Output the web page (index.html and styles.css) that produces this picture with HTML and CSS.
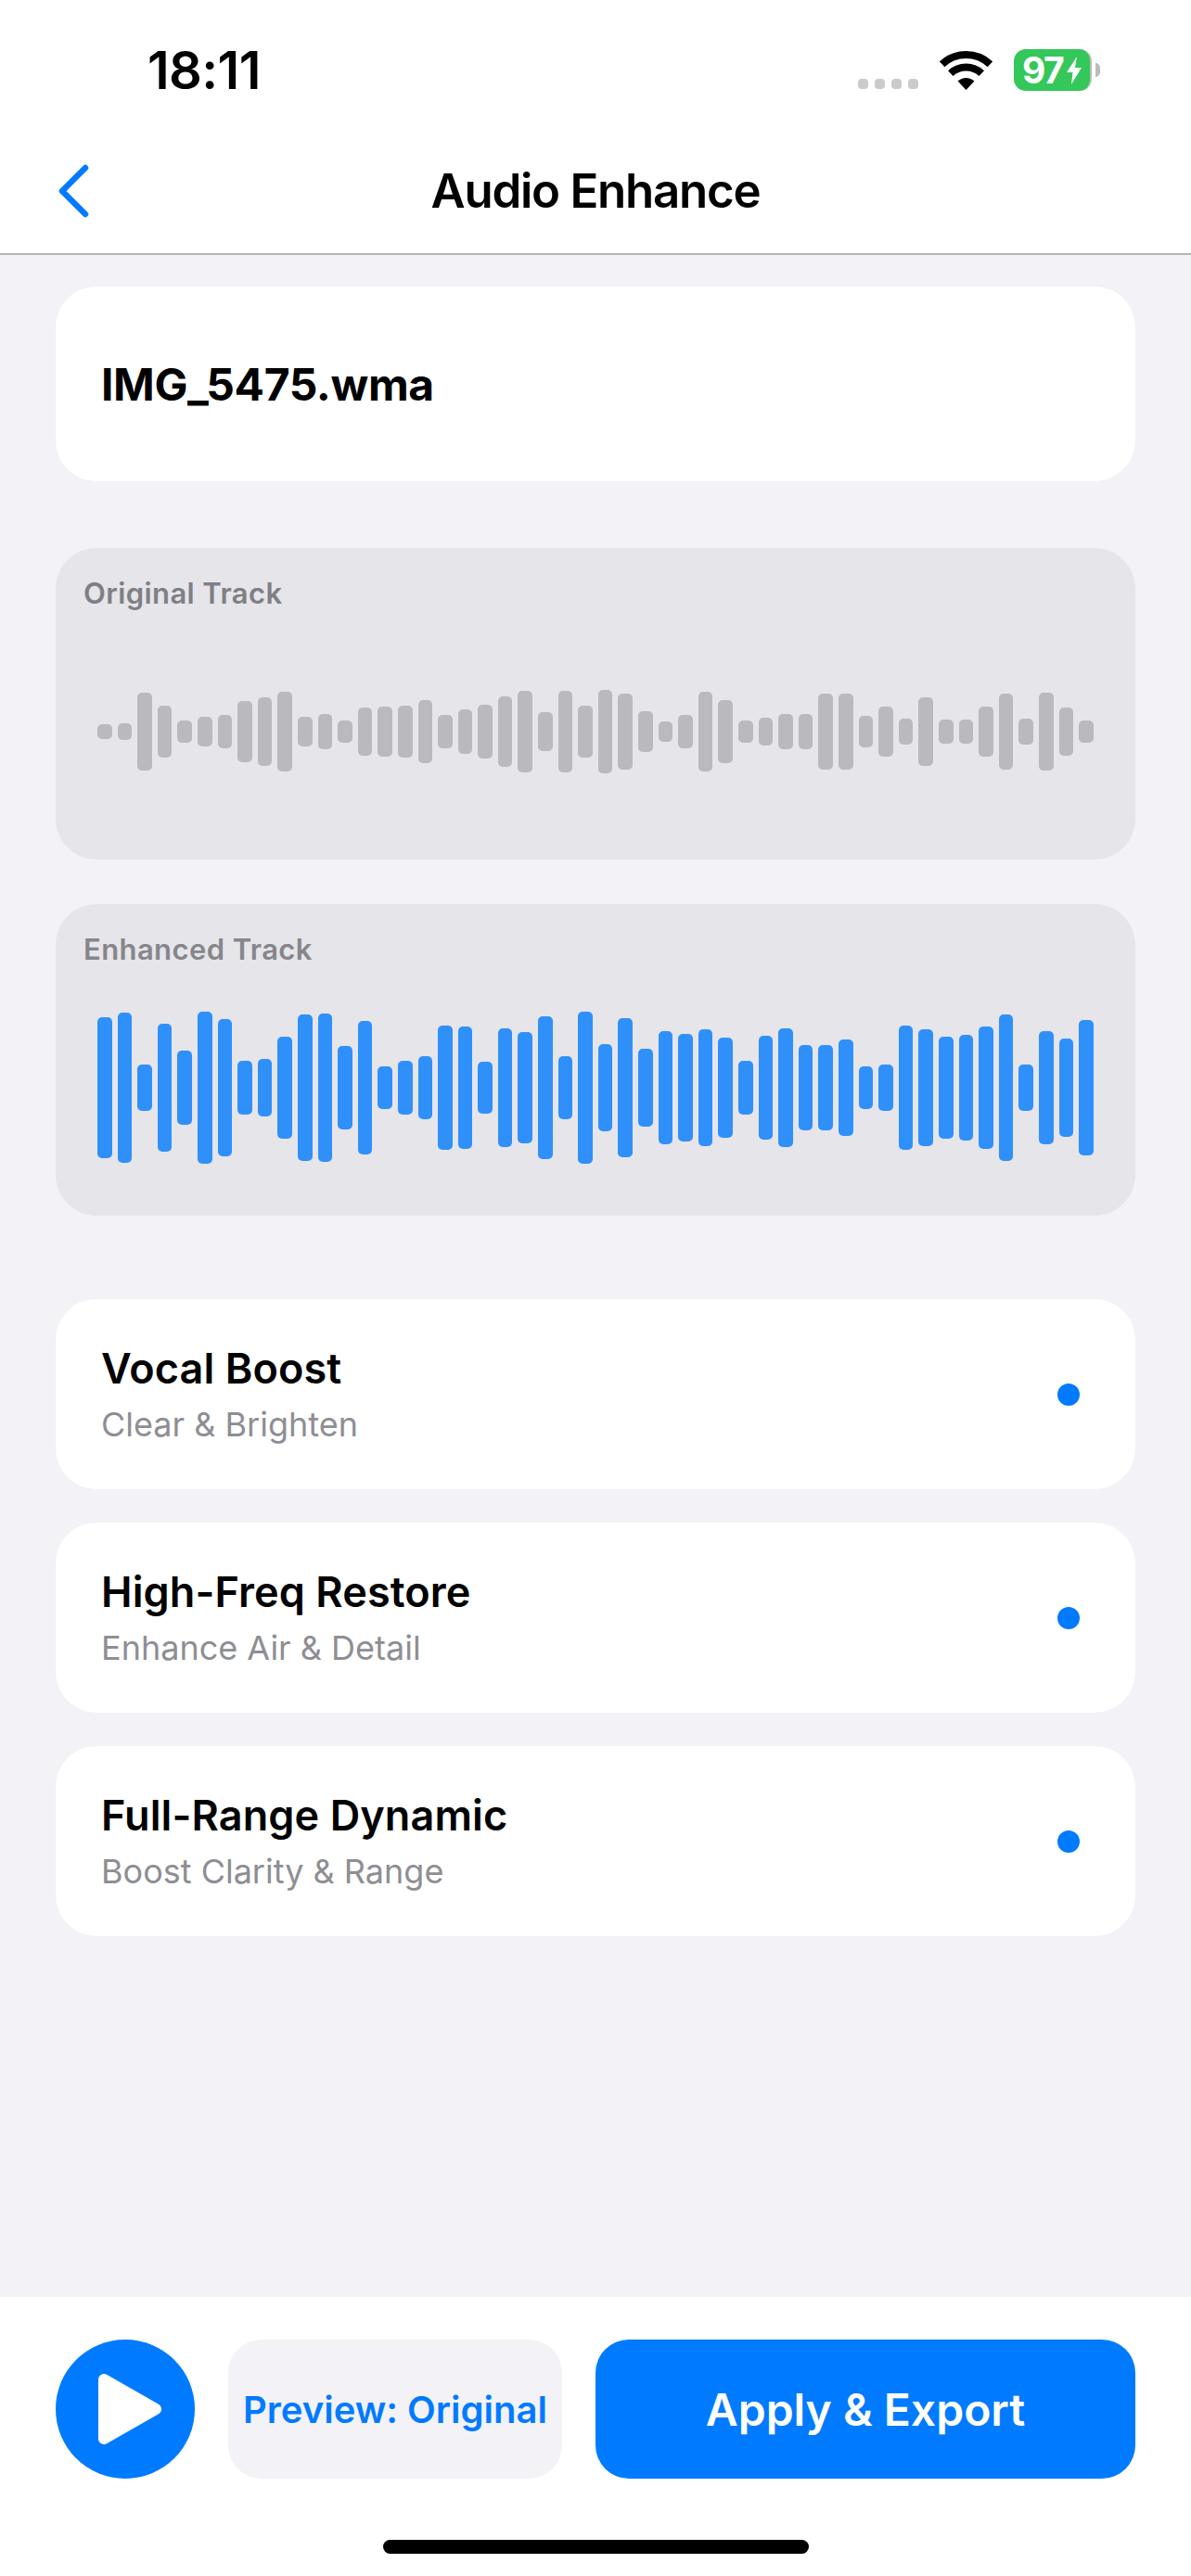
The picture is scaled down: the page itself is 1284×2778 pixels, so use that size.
FILE: index.html
```html
<!DOCTYPE html>
<html lang="en">
<head>
<meta charset="utf-8">
<title>Audio Enhance</title>
<link rel="stylesheet" href="styles.css">
</head>
<body>
<div class="screen">
  <header class="header">
    <div class="status">
      <span class="time">18:11</span>
      <div class="status-icons">
        <div class="signal"><i></i><i></i><i></i><i></i></div>
        <svg class="wifi" viewBox="0 0 57 42" width="57" height="42"><path d="M2.6 14.2A38 38 0 0 1 54.4 14.2" fill="none" stroke="#000" stroke-width="8"/><path d="M11.8 24.1A24.5 24.5 0 0 1 45.2 24.1" fill="none" stroke="#000" stroke-width="8"/><path d="M28.5 42L19.6 32.5A13 13 0 0 1 37.4 32.5Z" fill="#000"/></svg>
        <div class="battery"><span class="battery-level">97</span><svg class="bolt" viewBox="0 0 16 30" width="16" height="30"><path d="M11 0L0 17H6.5L5 30L16 12H9Z" fill="#fff"/></svg></div>
        <span class="battery-nub"></span>
      </div>
    </div>
    <nav class="nav">
      <svg class="back" viewBox="0 0 34 58" width="34" height="58"><path d="M30 4L5 29L30 54" fill="none" stroke="#007aff" stroke-width="6.5" stroke-linecap="round" stroke-linejoin="round"/></svg>
      <h1 class="nav-title">Audio Enhance</h1>
    </nav>
  </header>

  <main class="content">
    <section class="file-card">IMG_5475.wma</section>

    <section class="track track-first">
      <div class="track-label label-original">Original Track</div>
      <div class="wave wave-gray">
        <span style="height:16px"></span><span style="height:18px"></span><span style="height:84px"></span><span style="height:56px"></span><span style="height:24px"></span><span style="height:32px"></span><span style="height:36px"></span><span style="height:66px"></span><span style="height:74px"></span><span style="height:86px"></span>
        <span style="height:32px"></span><span style="height:38px"></span><span style="height:24px"></span><span style="height:52px"></span><span style="height:54px"></span><span style="height:56px"></span><span style="height:68px"></span><span style="height:36px"></span><span style="height:48px"></span><span style="height:58px"></span>
        <span style="height:76px"></span><span style="height:88px"></span><span style="height:42px"></span><span style="height:88px"></span><span style="height:56px"></span><span style="height:90px"></span><span style="height:82px"></span><span style="height:44px"></span><span style="height:22px"></span><span style="height:36px"></span>
        <span style="height:86px"></span><span style="height:68px"></span><span style="height:24px"></span><span style="height:30px"></span><span style="height:38px"></span><span style="height:38px"></span><span style="height:82px"></span><span style="height:82px"></span><span style="height:34px"></span><span style="height:54px"></span>
        <span style="height:28px"></span><span style="height:74px"></span><span style="height:26px"></span><span style="height:26px"></span><span style="height:54px"></span><span style="height:82px"></span><span style="height:28px"></span><span style="height:84px"></span><span style="height:52px"></span><span style="height:24px"></span>
      </div>
    </section>

    <section class="track track-second">
      <div class="track-label label-enhanced">Enhanced Track</div>
      <div class="wave wave-blue">
        <span style="height:152px"></span><span style="height:162px"></span><span style="height:50px"></span><span style="height:138px"></span><span style="height:80px"></span><span style="height:164px"></span><span style="height:148px"></span><span style="height:58px"></span><span style="height:62px"></span><span style="height:110px"></span>
        <span style="height:158px"></span><span style="height:160px"></span><span style="height:90px"></span><span style="height:144px"></span><span style="height:46px"></span><span style="height:58px"></span><span style="height:68px"></span><span style="height:134px"></span><span style="height:132px"></span><span style="height:56px"></span>
        <span style="height:128px"></span><span style="height:120px"></span><span style="height:154px"></span><span style="height:68px"></span><span style="height:164px"></span><span style="height:94px"></span><span style="height:150px"></span><span style="height:84px"></span><span style="height:122px"></span><span style="height:116px"></span>
        <span style="height:126px"></span><span style="height:108px"></span><span style="height:58px"></span><span style="height:112px"></span><span style="height:128px"></span><span style="height:92px"></span><span style="height:92px"></span><span style="height:104px"></span><span style="height:46px"></span><span style="height:50px"></span>
        <span style="height:134px"></span><span style="height:126px"></span><span style="height:110px"></span><span style="height:114px"></span><span style="height:132px"></span><span style="height:158px"></span><span style="height:50px"></span><span style="height:122px"></span><span style="height:106px"></span><span style="height:146px"></span>
      </div>
    </section>

    <section class="options">
      <div class="option">
        <div class="option-text"><div class="option-title">Vocal Boost</div><div class="option-sub">Clear &amp; Brighten</div></div>
        <span class="dot"></span>
      </div>
      <div class="option">
        <div class="option-text"><div class="option-title">High-Freq Restore</div><div class="option-sub">Enhance Air &amp; Detail</div></div>
        <span class="dot"></span>
      </div>
      <div class="option">
        <div class="option-text"><div class="option-title">Full-Range Dynamic</div><div class="option-sub">Boost Clarity &amp; Range</div></div>
        <span class="dot"></span>
      </div>
    </section>
  </main>

  <footer class="footer">
    <div class="actions">
      <button class="play" type="button"><svg viewBox="0 0 68 76" width="68" height="76"><path d="M6 6L62 38L6 70Z" fill="#fff" stroke="#fff" stroke-width="12" stroke-linejoin="round"/></svg></button>
      <button class="preview" type="button">Preview: Original</button>
      <button class="apply" type="button">Apply &amp; Export</button>
    </div>
    <div class="home-indicator"></div>
  </footer>
</div>
</body>
</html>
```
FILE: styles.css
```css
* { box-sizing: border-box; }
html, body { margin: 0; padding: 0; }
body { font-family: Inter, "Liberation Sans", sans-serif; background: #f2f2f7; color: #000; }

.screen { width: 1284px; height: 2778px; display: flex; flex-direction: column; overflow: hidden; }

.header { height: 275px; flex: none; background: #fff; border-bottom: 2px solid #b4b4b8; }
.status { height: 132px; padding: 53px 98px 0 159px; display: flex; justify-content: space-between; align-items: flex-start; }
.time { font-size: 56px; font-weight: 600; line-height: 47px; letter-spacing: -0.6px; }
.status-icons { height: 45px; display: flex; align-items: center; }
.signal { align-self: flex-end; margin: 0 23px 2px 0; display: flex; gap: 7px; }
.signal i { width: 11px; height: 11px; border-radius: 4px; background: #cbcbcb; }
.wifi { margin-right: 23px; }
.battery { width: 84px; height: 45px; background: #34c759; border-radius: 13px; border-right: 2px solid #b9bdba; padding-left: 9px; display: flex; align-items: center; }
.battery-level { color: #fff; font-size: 39px; font-weight: 700; line-height: 1; letter-spacing: -1.5px; }
.bolt { margin-left: 4px; }
.battery-nub { width: 5px; height: 15px; margin-left: 4px; background: #bcbcbc; border-radius: 0 8px 8px 0; }

.nav { height: 141px; position: relative; display: flex; align-items: center; justify-content: center; padding-top: 6px; }
.back { position: absolute; left: 62px; top: 45px; }
.nav-title { margin: 0; font-size: 51px; font-weight: 600; line-height: 60px; letter-spacing: -1.25px; }

.content { flex: 1; padding: 34px 60px 0; display: flex; flex-direction: column; }
.file-card { height: 210px; background: #fff; border-radius: 44px; padding: 0 49px; display: flex; align-items: center; font-size: 48px; font-weight: 700; letter-spacing: -0.4px; }

.track { height: 336px; background: #e5e5ea; border-radius: 44px; padding: 31px 30px 0; }
.track-first { margin-top: 72px; }
.track-second { margin-top: 48px; }
.track-label { height: 36px; line-height: 36px; font-size: 31px; font-weight: 600; letter-spacing: 0.4px; }
.label-original { color: #7f7f85; }
.label-enhanced { color: #86868b; }

.wave { height: 168px; margin: 47px 15px 0; display: flex; align-items: center; gap: 6px; }
.wave span { flex: 1; border-radius: 5px; }
.wave-gray span { background: #b9b9be; }
.wave-blue span { background: #2f90fa; }

.options { margin-top: 90px; display: flex; flex-direction: column; gap: 36px; }
.option { height: 205px; background: #fff; border-radius: 44px; padding: 0 60px 0 49px; display: flex; align-items: center; justify-content: space-between; }
.option-text { display: flex; flex-direction: column; }
.option-title { font-size: 45px; font-weight: 600; line-height: 54px; letter-spacing: 0.1px; }
.option-sub { margin-top: 11px; font-size: 36px; line-height: 44px; color: #8e8e93; }
.dot { width: 24px; height: 24px; border-radius: 50%; background: #007aff; }

.footer { height: 301px; flex: none; background: #fff; padding-top: 46px; display: flex; flex-direction: column; align-items: center; }
.actions { width: 1164px; height: 150px; display: flex; gap: 36px; }
.actions button { border: 0; padding: 0; font-family: inherit; display: flex; align-items: center; justify-content: center; }
.play { width: 150px; flex: none; background: #007aff; border-radius: 50%; }
.play svg { margin-left: 10px; }
.preview { width: 360px; flex: none; background: #f2f2f7; border-radius: 36px; color: #007aff; font-size: 40px; font-weight: 600; white-space: nowrap; }
.apply { flex: 1; background: #007aff; border-radius: 36px; color: #fff; font-size: 48px; font-weight: 600; }
.home-indicator { width: 459px; height: 15px; margin-top: 66px; border-radius: 8px; background: #000; }
```
